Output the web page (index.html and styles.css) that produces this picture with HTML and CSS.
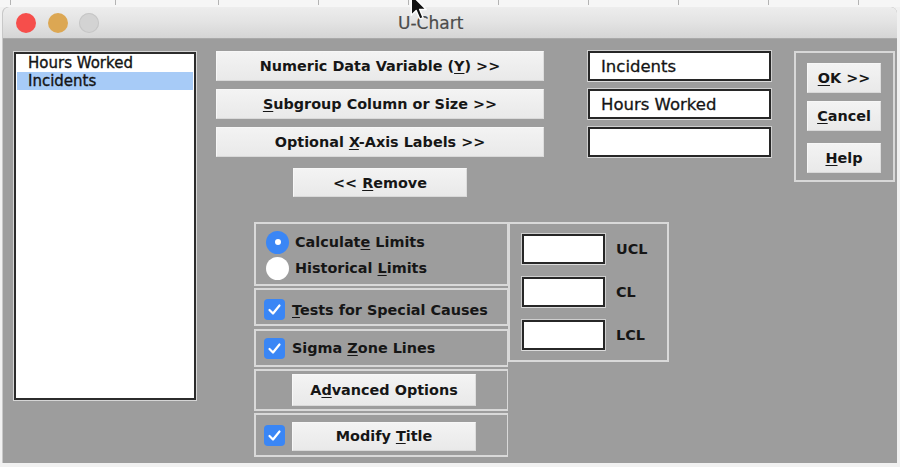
FILE: index.html
```html
<!DOCTYPE html>
<html>
<head>
<meta charset="utf-8">
<link rel="stylesheet" href="styles.css">
</head>
<body>
<div class="sheet-top">
  <span class="cell"></span><span class="cell"></span><span class="cell"></span><span class="cell"></span><span class="cell"></span><span class="cell"></span><span class="cell"></span><span class="cell"></span><span class="cell"></span><span class="cell"></span>
</div>
<div class="window">
  <div class="titlebar">
    <span class="light red"></span>
    <span class="light yellow"></span>
    <span class="light gray"></span>
    <span class="title">U-Chart</span>
  </div>
  <div class="content">
    <div class="listbox">
      <div class="item">Hours Worked</div>
      <div class="item selected">Incidents</div>
    </div>
    <div class="main">
      <div class="top">
        <div class="vars">
          <button class="btn var"><span>Numeric Data Variable (<u>Y</u>) &gt;&gt;</span></button>
          <button class="btn var"><span><u>S</u>ubgroup Column or Size &gt;&gt;</span></button>
          <button class="btn var"><span>Optional <u>X</u>-Axis Labels &gt;&gt;</span></button>
          <button class="btn remove"><span>&lt;&lt; <u>R</u>emove</span></button>
        </div>
        <div class="fields">
          <div class="field">Incidents</div>
          <div class="field">Hours Worked</div>
          <div class="field"></div>
        </div>
        <div class="actions">
          <button class="btn act"><span><u>O</u>K &gt;&gt;</span></button>
          <button class="btn act"><span><u>C</u>ancel</span></button>
          <button class="btn act help"><span><u>H</u>elp</span></button>
        </div>
      </div>
      <div class="options">
        <div class="opt-col">
          <div class="sec sec-radio">
            <div class="row"><span class="radio on"></span><span class="lbl">Calculat<u>e</u> Limits</span></div>
            <div class="row"><span class="radio"></span><span class="lbl">Historical <u>L</u>imits</span></div>
          </div>
          <div class="sec sec-tests">
            <span class="check"><svg viewBox="0 0 21 21"><path d="M5.5 11 L9 14.5 L15.5 6.5" /></svg></span>
            <span class="lbl"><u>T</u>ests for Special Causes</span>
          </div>
          <div class="sec sec-sigma">
            <span class="check"><svg viewBox="0 0 21 21"><path d="M5.5 11 L9 14.5 L15.5 6.5" /></svg></span>
            <span class="lbl">Sigma <u>Z</u>one Lines</span>
          </div>
          <div class="sec sec-adv">
            <button class="btn opt"><span>A<u>d</u>vanced Options</span></button>
          </div>
          <div class="sec sec-title">
            <span class="check"><svg viewBox="0 0 21 21"><path d="M5.5 11 L9 14.5 L15.5 6.5" /></svg></span>
            <button class="btn opt short"><span>Modify <u>T</u>itle</span></button>
          </div>
        </div>
        <div class="limits">
          <div class="lim-row"><span class="field small"></span><span class="lbl">UCL</span></div>
          <div class="lim-row"><span class="field small"></span><span class="lbl">CL</span></div>
          <div class="lim-row"><span class="field small"></span><span class="lbl">LCL</span></div>
        </div>
      </div>
    </div>
  </div>
</div>
<svg class="cursor" viewBox="0 0 14 22" width="18" height="29">
  <path d="M1 1 L1 17 L4.8 13.4 L7.6 20 L10.2 18.9 L7.5 12.5 L12.6 12.5 Z" fill="#111" stroke="#fff" stroke-width="1.1" stroke-linejoin="round"/>
</svg>
</body>
</html>
```
FILE: styles.css
```css
* { box-sizing: border-box; }
html, body { margin: 0; padding: 0; }
body {
  width: 900px;
  height: 467px;
  overflow: hidden;
  position: relative;
  background: #f1f1f1;
  font-family: "DejaVu Sans", "Noto Sans", sans-serif;
  color: #141414;
}

/* spreadsheet peeking behind the window */
.sheet-top { height: 7px; display: flex; padding-left: 10px; background: #f6f6f6; overflow: hidden; }
.sheet-top .cell { height: 5px; border-left: 1px solid #b4b4b4; width: 90px; flex: none; }
.sheet-top .cell:nth-child(1) { width: 105px; }
.sheet-top .cell:nth-child(2) { width: 103px; }
.sheet-top .cell:nth-child(3) { width: 100px; }
.sheet-top .cell:nth-child(10) { width: 40px; }

.window {
  margin-left: 3px;
  width: 894px;
  height: 456px;
  background: #9d9d9d;
  border-radius: 6px 6px 0 0;
  overflow: hidden;
  box-shadow: -1px 0 0 #c8c8c8;
}

.titlebar {
  height: 32px;
  display: flex;
  align-items: center;
  padding-left: 13px;
  gap: 12px;
  background: linear-gradient(#ededed, #e3e3e3 50%, #d5d5d5);
  border-bottom: 1px solid #a9a9a9;
}
.light { width: 20px; height: 20px; border-radius: 50%; flex: none; }
.light.red { background: #f64e4b; }
.light.yellow { background: #dca753; }
.light.gray { background: #d3d3d3; box-shadow: inset 0 0 0 1px #c6c6c6; margin-left: -1px; }
.title { margin-left: 287px; font-size: 17px; color: #4c4c4c; margin-top: 1px; -webkit-text-stroke: 0.2px #4c4c4c; }

.content { display: flex; padding: 12px 0 0 11px; }

.listbox {
  margin-top: 1px;
  width: 182px;
  height: 348px;
  background: #fff;
  border: 2px solid #2c2c2c;
  box-shadow: 0 0 0 1px #d6d6d6;
}
.item { height: 18px; line-height: 18px; font-size: 15px; padding-left: 11px; margin: 0 1px; -webkit-text-stroke: 0.35px #141414; }
.item.selected { background: #a7cbf7; }

.main { margin-left: 20px; display: flex; flex-direction: column; }
.top { display: flex; align-items: flex-start; }

.btn {
  font-family: "DejaVu Sans", "Noto Sans", sans-serif;
  font-weight: bold;
  font-size: 14.4px;
  color: #161616;
  padding: 0;
  margin: 0;
  border: 1px solid #f7f7f7;
  border-bottom-color: #d9d9d9;
  border-right-color: #dddddd;
  background: linear-gradient(#f3f3f3, #e9e9e9);
  display: flex;
  align-items: center;
  justify-content: center;
  white-space: nowrap;
}
.btn u { text-underline-offset: 2px; }

.vars { width: 328px; display: flex; flex-direction: column; align-items: center; gap: 8px; }
.btn.var { width: 328px; height: 30px; }
.btn.remove { width: 174px; height: 29px; margin-top: 3px; }

.fields { margin-left: 44px; width: 183px; display: flex; flex-direction: column; gap: 8px; }
.field {
  height: 30px;
  background: #fff;
  border: 2px solid #272727;
  box-shadow: 0 1px 0 #dcdcdc, 0 0 0 1px #cfcfcf;
  font-size: 16.5px;
  padding-left: 11px;
  display: flex;
  align-items: center;
  -webkit-text-stroke: 0.3px #141414;
}

.actions {
  margin-left: 23px;
  width: 101px;
  height: 131px;
  border: 2px solid #d8d8d8;
  padding: 10px 0 0 11px;
  display: flex;
  flex-direction: column;
  gap: 8px;
}
.btn.act { width: 74px; height: 30px; }
.btn.act.help { margin-top: 4px; }

.options { display: flex; margin: 25px 0 0 38px; }
.opt-col { width: 254px; display: flex; flex-direction: column; }
.sec { border: 2px solid #d9d9d9; border-right-width: 1px; display: flex; align-items: center; padding-left: 8px; }
.sec-radio { height: 64px; flex-direction: column; align-items: flex-start; padding: 5px 0 0 10px; }
.sec-tests { height: 38px; margin-top: 2px; padding-top: 5px; }
.sec-sigma { height: 38px; margin-top: 3px; }
.sec-adv { height: 42px; margin-top: 2px; padding-left: 36px; }
.sec-title { height: 44px; margin-top: 2px; }

.row { height: 26px; display: flex; align-items: center; }
.radio { width: 23px; height: 23px; border-radius: 50%; background: #fff; flex: none; position: relative; }
.radio.on { background: #3a86f5; }
.radio.on::after {
  content: "";
  position: absolute;
  left: 8.5px; top: 8.5px;
  width: 6px; height: 6px;
  border-radius: 50%;
  background: #fff;
}
.lbl { font-weight: bold; font-size: 14.4px; color: #161616; white-space: nowrap; }
.row .lbl { margin-left: 6px; }
.lbl u { text-underline-offset: 2px; }

.check {
  width: 21px; height: 21px;
  border-radius: 4px;
  background: #3a86f5;
  flex: none;
  display: flex;
}
.check svg { width: 21px; height: 21px; }
.check path { fill: none; stroke: #fff; stroke-width: 2.2; stroke-linecap: round; stroke-linejoin: round; }
.check + .lbl { margin-left: 7px; }
.check + .btn { margin-left: 7px; }

.btn.opt { width: 184px; height: 32px; }
.btn.opt.short { height: 29px; margin-top: 2px; }

.limits {
  width: 161px;
  height: 140px;
  border: 2px solid #d9d9d9;
  padding: 10px 0 0 12px;
  display: flex;
  flex-direction: column;
  gap: 13px;
}
.lim-row { display: flex; align-items: center; }
.field.small { width: 83px; height: 30px; }
.lim-row .lbl { margin-left: 11px; }

.cursor { position: absolute; left: 410px; top: -7px; }
```
